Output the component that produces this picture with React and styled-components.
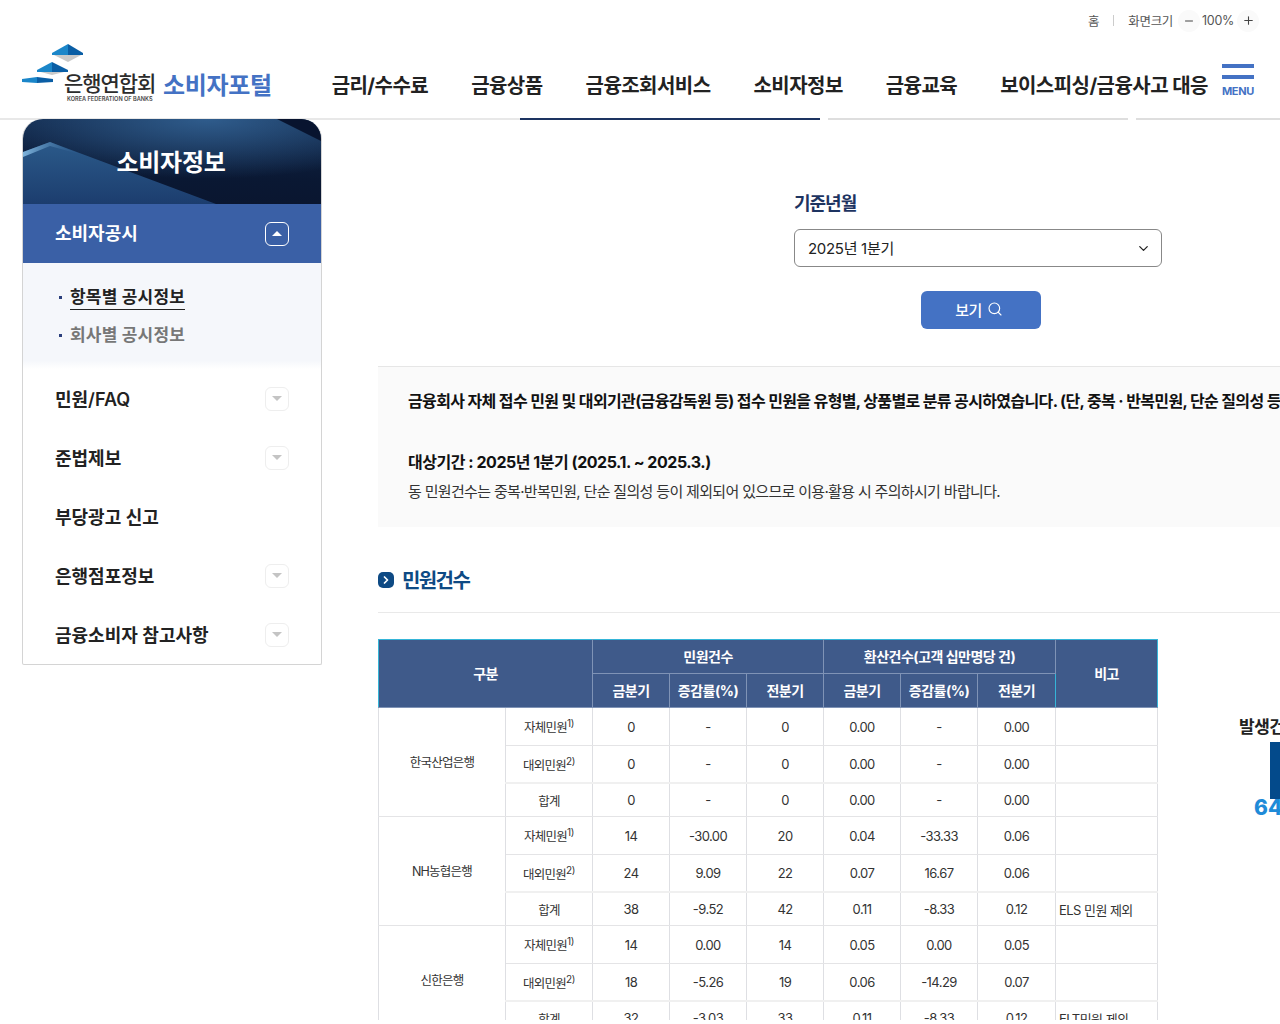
import React from 'react'
import styled, { createGlobalStyle } from 'styled-components'
import { ChevronDown, ChevronRight, Minus, Plus, Search } from 'lucide-react'

const GlobalStyle = createGlobalStyle`
  body {
    margin: 0;
    background: #fff;
    font-family: "Inter", "Noto Sans CJK KR", sans-serif;
    color: #222;
  }
`

const Page = styled.div`
  width: 1280px;
  height: 1020px;
  overflow: hidden;
`

const Header = styled.header`
  position: relative;
  height: 118px;
  border-bottom: 2px solid #e8e8e8;
  box-sizing: content-box;
`

const UtilBar = styled.div`
  height: 42px;
  display: flex;
  align-items: center;
  justify-content: flex-end;
  padding-right: 21px;
  padding-bottom: 1px;
  box-sizing: border-box;
  font-size: 12.5px;
  color: #555;
  letter-spacing: -0.3px;
`

const UtilDivider = styled.span`
  width: 1px;
  height: 11px;
  background: #ccc;
  margin: 0 14px;
`

const ZoomButton = styled.span`
  width: 22px;
  height: 22px;
  border-radius: 50%;
  background: #fafafa;
  display: flex;
  align-items: center;
  justify-content: center;
  margin: 0 ${p => p.$right ? '0' : '2px'} 0 ${p => p.$right ? '3px' : '5px'};
  color: #444;
`

const NavRow = styled.div`
  display: flex;
  align-items: flex-start;
  padding-left: 22px;
`

const Logo = styled.div`
  display: grid;
  width: 140px;
  height: 62px;
`

const LogoIcon = styled.svg`
  grid-area: 1 / 1;
  width: 62px;
  height: 42px;
  margin-top: 2px;
`

const LogoWords = styled.div`
  grid-area: 1 / 1;
  margin: 29px 0 0 42px;
  display: flex;
  flex-direction: column;
`

const LogoName = styled.span`
  font-size: 21px;
  font-weight: 500;
  line-height: 25px;
  letter-spacing: -1.1px;
  color: #2c2c2c;
  white-space: nowrap;
`

const LogoEng = styled.span`
  font-size: 5.6px;
  font-weight: 600;
  line-height: 7px;
  margin: 0 0 0 3px;
  color: #444;
  white-space: nowrap;
`

const PortalTitle = styled.div`
  margin: 26px 0 0 1px;
  font-size: 24px;
  font-weight: 700;
  line-height: 36px;
  letter-spacing: -0.35px;
  color: #4472c4;
  white-space: nowrap;
`

const MainNav = styled.nav`
  display: flex;
  gap: 43px;
  margin: 27px 0 0 60px;
`

const NavItem = styled.a`
  font-size: 20px;
  font-weight: 700;
  line-height: 34px;
  letter-spacing: -0.55px;
  color: #222;
  white-space: nowrap;
`

const MenuButton = styled.div`
  margin: 22px 0 0 14px;
  width: 32px;
  display: flex;
  flex-direction: column;
`

const MenuBar = styled.span`
  height: 4px;
  background: #4472c4;
  margin-bottom: 7px;
`

const MenuLabel = styled.span`
  font-size: 11px;
  font-weight: 700;
  line-height: 12px;
  letter-spacing: -0.3px;
  margin-top: -1px;
  color: #4472c4;
`

const TabStrip = styled.div`
  position: absolute;
  left: 520px;
  right: 0;
  bottom: -2px;
  display: flex;
  gap: 8px;
  background: #fff;
`

const TabLine = styled.span`
  flex: none;
  width: ${p => p.$width}px;
  height: 2px;
  background: ${p => p.$active ? '#1d3461' : '#dedede'};
`

const Body = styled.div`
  display: flex;
  align-items: flex-start;
  padding-left: 22px;
`

const Sidebar = styled.aside`
  flex: none;
  width: 298px;
  margin-top: -1px;
  border: 1px solid #d4d4d4;
  border-top: 0;
  border-radius: 20px 20px 2px 2px;
`

const SideHead = styled.div`
  position: relative;
  height: 85px;
  border-radius: 20px 20px 0 0;
  overflow: hidden;
  background:
    radial-gradient(ellipse 75% 70% at 62% 0, #2f5c8c 0, rgba(47, 92, 140, 0) 100%),
    linear-gradient(180deg, #12294c 0%, #0a1833 70%, #0a1630 100%);
  display: flex;
  align-items: center;
  justify-content: center;
`

const SideArt = styled.svg`
  position: absolute;
  inset: 0;
  width: 100%;
  height: 100%;
`

const SideTitle = styled.h2`
  position: relative;
  margin: 0 0 2px -2px;
  font-size: 24px;
  font-weight: 700;
  letter-spacing: -0.3px;
  color: #fff;
`

const ActiveRow = styled.div`
  height: 59px;
  padding: 0 32px 4px;
  box-sizing: border-box;
  background: #3a60a6;
  display: flex;
  align-items: center;
  justify-content: space-between;
  font-size: 18px;
  font-weight: 600;
  color: #fff;
`

const Toggle = styled.span`
  width: 22px;
  height: 22px;
  border-radius: 6px;
  border: 1px solid ${p => p.$open ? '#fff' : '#eeeeee'};
  display: flex;
  align-items: center;
  justify-content: center;
  margin-bottom: ${p => p.$open ? '-4px' : '0'};
  &::after {
    content: '';
    border-left: 5px solid transparent;
    border-right: 5px solid transparent;
    ${p => p.$open
      ? 'border-bottom: 5px solid #fff;'
      : 'border-top: 5px solid #c4c4c4;'}
  }
`

const SubPanel = styled.ul`
  list-style: none;
  margin: 0;
  padding: 22px 0 0 36px;
  height: 84px;
  background: linear-gradient(180deg, #f5f7fb 92%, #fff 100%);
  display: flex;
  flex-direction: column;
  gap: 14px;
`

const SubItem = styled.li`
  position: relative;
  padding-left: 11px;
  height: 24px;
  font-size: 17px;
  font-weight: 700;
  line-height: 24px;
  letter-spacing: 0.2px;
  color: ${p => p.$active ? '#222' : '#777'};
  &::before {
    content: '';
    position: absolute;
    left: 0;
    top: 11px;
    width: 3px;
    height: 3px;
    background: #2b3f7c;
  }
`

const SubLabel = styled.span`
  display: inline-block;
  line-height: 23px;
  border-bottom: ${p => p.$active ? '1px solid #222' : '0'};
`

const MenuRow = styled.div`
  height: 59px;
  padding: 0 32px;
  display: flex;
  align-items: center;
  justify-content: space-between;
  font-size: 18px;
  font-weight: 600;
  color: #222;
`

const MenuLabelText = styled.span`
  margin-top: -2px;
`

const Content = styled.main`
  flex: none;
  width: 902px;
  margin-left: 56px;
`

const Filter = styled.section`
  margin-left: 416px;
  width: 368px;
  padding-top: 70px;
  height: 176px;
  box-sizing: content-box;
`

const FilterLabel = styled.div`
  font-size: 18px;
  font-weight: 700;
  line-height: 28px;
  letter-spacing: -1px;
  color: #1d3461;
  margin-bottom: 11px;
`

const SelectBox = styled.div`
  height: 36px;
  border: 1px solid #888;
  border-radius: 6px;
  padding: 0 10px 0 13px;
  display: flex;
  align-items: center;
  justify-content: space-between;
  font-size: 15px;
  letter-spacing: -0.3px;
  color: #222;
`

const SelectText = styled.span`
  margin-top: -2px;
`

const ViewButton = styled.button`
  display: flex;
  align-items: center;
  justify-content: center;
  gap: 5px;
  width: 120px;
  height: 38px;
  margin: 24px 0 0 127px;
  padding: 0 4px 2px 0;
  border: 0;
  border-radius: 6px;
  background: #4472c4;
  color: #fff;
  font: 500 15px "Inter", "Noto Sans CJK KR", sans-serif;
  letter-spacing: -0.5px;
`

const Notice = styled.section`
  height: 160px;
  border-top: 1px solid #e6e6e6;
  background: #fafafa;
  padding-left: 30px;
  white-space: nowrap;
  overflow: hidden;
`

const NoticeLead = styled.p`
  margin: 22px 0 37px;
  font-size: 16px;
  font-weight: 700;
  line-height: 24px;
  letter-spacing: -0.63px;
  color: #111;
`

const NoticeTerm = styled.p`
  margin: 0 0 6px;
  font-size: 16px;
  font-weight: 700;
  line-height: 24px;
  letter-spacing: -0.47px;
  color: #111;
`

const NoticeText = styled.p`
  margin: 0;
  font-size: 15px;
  line-height: 24px;
  letter-spacing: -0.67px;
  color: #333;
`

const SectionHead = styled.div`
  display: flex;
  align-items: flex-start;
  gap: 8px;
  height: 86px;
  padding-top: 29px;
  box-sizing: border-box;
  border-bottom: 1px solid #e9e9e9;
`

const SectionIcon = styled.span`
  width: 16px;
  height: 16px;
  margin-top: 16px;
  border-radius: 5px;
  background: #0e4a84;
  color: #fff;
  display: flex;
  align-items: center;
  justify-content: center;
`

const SectionTitle = styled.h3`
  margin: 11px 0 0;
  font-size: 20px;
  font-weight: 700;
  line-height: 28px;
  letter-spacing: -1.6px;
  color: #0e4a84;
`

const TableRow = styled.div`
  display: flex;
  align-items: flex-start;
  margin-top: 26px;
`

const Table = styled.table`
  flex: none;
  width: 779px;
  table-layout: fixed;
  border-collapse: collapse;
  font-size: 13px;
  letter-spacing: -0.55px;
  color: #333;
`

const HeadCell = styled.th`
  height: 34px;
  padding: 0 0 2px;
  box-sizing: border-box;
  background: #3f5a8a;
  color: #fff;
  font-size: 14px;
  font-weight: 700;
  letter-spacing: -0.5px;
  border: 1px solid #7f93b6;
  border-top: 1px solid #35b5d8;
  &:first-child {
    border-left: 1px solid #35b5d8;
  }
  &:last-child {
    border-left: 1px solid #35b5d8;
    border-right: 1px solid #35b5d8;
  }
`

const SubHead = styled(HeadCell)`
  border-top: 1px solid #7f93b6;
  &:last-child {
    border-left: 1px solid #7f93b6;
    border-right: 1px solid #35b5d8;
  }
`

const Cell = styled.td`
  height: ${p => p.$height}px;
  padding: ${p => p.$left ? '0 0 0 3px' : '0'};
  text-align: ${p => p.$left ? 'left' : 'center'};
  border: 1px solid #dedfe3;
  border-bottom: ${p => p.$heavy ? '2px solid #f0f0f0' : '1px solid #e4e4e6'};
  white-space: nowrap;
`

const KindCell = styled(Cell)`
  font-size: 12.5px;
  letter-spacing: -0.75px;
`

const BankCell = styled.td`
  padding: 0 0 2px;
  text-align: center;
  font-size: 12.5px;
  letter-spacing: -0.75px;
  border: 1px solid #dedfe3;
  border-bottom: 1px solid #e4e4e6;
  white-space: nowrap;
`

const Sup = styled.sup`
  font-size: 10px;
  line-height: 0;
  letter-spacing: -0.3px;
`

const ChartColumn = styled.div`
  flex: none;
  width: 122px;
  margin: 78px 0 0 81px;
  overflow: hidden;
  height: 100px;
`

const ChartTitle = styled.div`
  font-size: 17px;
  font-weight: 700;
  line-height: 20px;
  letter-spacing: -0.5px;
  color: #222;
  white-space: nowrap;
`

const ChartBar = styled.div`
  width: 40px;
  height: 57px;
  margin: 5px 0 0 31px;
  background: #034a8b;
`

const ChartValue = styled.div`
  margin: -2px 0 0 15px;
  font-size: 21px;
  font-weight: 800;
  line-height: 22px;
  color: #1f8bd8;
`

const nav = ['금리/수수료', '금융상품', '금융조회서비스', '소비자정보', '금융교육', '보이스피싱/금융사고 대응']

const menus = [
  { label: '민원/FAQ', toggle: true },
  { label: '준법제보', toggle: true },
  { label: '부당광고 신고', toggle: false },
  { label: '은행점포정보', toggle: true },
  { label: '금융소비자 참고사항', toggle: true },
]

const banks = [
  {
    name: '한국산업은행',
    rows: [
      ['0', '-', '0', '0.00', '-', '0.00', ''],
      ['0', '-', '0', '0.00', '-', '0.00', ''],
      ['0', '-', '0', '0.00', '-', '0.00', ''],
    ],
  },
  {
    name: 'NH농협은행',
    rows: [
      ['14', '-30.00', '20', '0.04', '-33.33', '0.06', ''],
      ['24', '9.09', '22', '0.07', '16.67', '0.06', ''],
      ['38', '-9.52', '42', '0.11', '-8.33', '0.12', 'ELS 민원 제외'],
    ],
  },
  {
    name: '신한은행',
    rows: [
      ['14', '0.00', '14', '0.05', '0.00', '0.05', ''],
      ['18', '-5.26', '19', '0.06', '-14.29', '0.07', ''],
      ['32', '-3.03', '33', '0.11', '-8.33', '0.12', 'ELT민원 제외'],
    ],
  },
]

const kinds = [
  { label: '자체민원', sup: '1)', height: 37 },
  { label: '대외민원', sup: '2)', height: 36 },
  { label: '합계', height: 32 },
]

const colWidths = [127, 87, 77, 77, 77, 77, 77, 78, 102]

function App() {
  return (
    <Page>
      <GlobalStyle />
      <Header>
        <UtilBar>
          <span>홈</span>
          <UtilDivider />
          <span>화면크기</span>
          <ZoomButton><Minus size={12} /></ZoomButton>
          <span>100%</span>
          <ZoomButton $right><Plus size={13} /></ZoomButton>
        </UtilBar>
        <NavRow>
          <Logo>
            <LogoIcon viewBox="0 0 62 42">
              <polygon points="30,10 61,10 46,18" fill="#c9c9c9" />
              <polygon points="30,9 46,0 46,11 30,11" fill="#1b86c9" />
              <polygon points="46,0 61,9 61,11 46,11" fill="#0a5ea5" />
              <polygon points="15,27 46,27 30,31" fill="#c9c9c9" />
              <polygon points="15,26 30,18 30,28 15,28" fill="#1b86c9" />
              <polygon points="30,18 46,26 46,28 30,28" fill="#0a5ea5" />
              <polygon points="0,35 15,33 15,39 0,38" fill="#1b86c9" />
              <polygon points="15,33 31,35 31,38 15,39" fill="#0a5ea5" />
            </LogoIcon>
            <LogoWords>
              <LogoName>은행연합회</LogoName>
              <LogoEng>KOREA FEDERATION OF BANKS</LogoEng>
            </LogoWords>
          </Logo>
          <PortalTitle>소비자포털</PortalTitle>
          <MainNav>
            {nav.map(item => <NavItem key={item}>{item}</NavItem>)}
          </MainNav>
          <MenuButton>
            <MenuBar />
            <MenuBar />
            <MenuLabel>MENU</MenuLabel>
          </MenuButton>
        </NavRow>
        <TabStrip>
          <TabLine $width={300} $active />
          <TabLine $width={300} />
          <TabLine $width={144} />
        </TabStrip>
      </Header>
      <Body>
        <Sidebar>
          <SideHead>
            <SideArt viewBox="0 0 298 85" preserveAspectRatio="none">
              <defs>
                <linearGradient id="ridge" x1="0" y1="0" x2="0" y2="1">
                  <stop offset="0" stopColor="#2b5a8a" />
                  <stop offset="1" stopColor="#1c3d6e" />
                </linearGradient>
                <linearGradient id="shine" x1="0" y1="0" x2="1" y2="0">
                  <stop offset="0" stopColor="#7fb4dc" />
                  <stop offset="1" stopColor="#2f6092" stopOpacity="0" />
                </linearGradient>
              </defs>
              <polygon points="0,33 27,23 193,85 0,85" fill="url(#ridge)" />
              <polygon points="0,33 27,23 60,36 27,27 0,38" fill="url(#shine)" />
              <polygon points="254,0 298,22 298,0" fill="#08142f" />
            </SideArt>
            <SideTitle>소비자정보</SideTitle>
          </SideHead>
          <ActiveRow>
            소비자공시
            <Toggle $open />
          </ActiveRow>
          <SubPanel>
            <SubItem $active><SubLabel $active>항목별 공시정보</SubLabel></SubItem>
            <SubItem><SubLabel>회사별 공시정보</SubLabel></SubItem>
          </SubPanel>
          {menus.map(menu => (
            <MenuRow key={menu.label}>
              <MenuLabelText>{menu.label}</MenuLabelText>
              {menu.toggle && <Toggle />}
            </MenuRow>
          ))}
        </Sidebar>
        <Content>
          <Filter>
            <FilterLabel>기준년월</FilterLabel>
            <SelectBox>
              <SelectText>2025년 1분기</SelectText>
              <ChevronDown size={15} strokeWidth={2} />
            </SelectBox>
            <ViewButton>보기 <Search size={16} strokeWidth={1.7} /></ViewButton>
          </Filter>
          <Notice>
            <NoticeLead>금융회사 자체 접수 민원 및 대외기관(금융감독원 등) 접수 민원을 유형별, 상품별로 분류 공시하였습니다. (단, 중복 · 반복민원, 단순 질의성 등은 제외)</NoticeLead>
            <NoticeTerm>대상기간 : 2025년 1분기 (2025.1. ~ 2025.3.)</NoticeTerm>
            <NoticeText>동 민원건수는 중복·반복민원, 단순 질의성 등이 제외되어 있으므로 이용·활용 시 주의하시기 바랍니다.</NoticeText>
          </Notice>
          <SectionHead>
            <SectionIcon><ChevronRight size={12} strokeWidth={3.5} /></SectionIcon>
            <SectionTitle>민원건수</SectionTitle>
          </SectionHead>
          <TableRow>
            <Table>
              <colgroup>
                {colWidths.map((w, i) => <col key={i} style={{ width: w }} />)}
              </colgroup>
              <thead>
                <tr>
                  <HeadCell colSpan={2} rowSpan={2}>구분</HeadCell>
                  <HeadCell colSpan={3}>민원건수</HeadCell>
                  <HeadCell colSpan={3}>환산건수(고객 십만명당 건)</HeadCell>
                  <HeadCell rowSpan={2}>비고</HeadCell>
                </tr>
                <tr>
                  {['금분기', '증감률(%)', '전분기', '금분기', '증감률(%)', '전분기'].map((h, i) => (
                    <SubHead key={i}>{h}</SubHead>
                  ))}
                </tr>
              </thead>
              <tbody>
                {banks.map(bank => bank.rows.map((row, r) => (
                  <tr key={bank.name + r}>
                    {r === 0 && <BankCell rowSpan={3}>{bank.name}</BankCell>}
                    <KindCell $height={kinds[r].height} $heavy={r === 1}>
                      {kinds[r].label}{kinds[r].sup && <Sup>{kinds[r].sup}</Sup>}
                    </KindCell>
                    {row.map((value, c) => (
                      <Cell key={c} $height={kinds[r].height} $heavy={r === 1} $left={c === 6}>{value}</Cell>
                    ))}
                  </tr>
                )))}
              </tbody>
            </Table>
            <ChartColumn>
              <ChartTitle>발생건수</ChartTitle>
              <ChartBar />
              <ChartValue>64</ChartValue>
            </ChartColumn>
          </TableRow>
        </Content>
      </Body>
    </Page>
  )
}

export default App
